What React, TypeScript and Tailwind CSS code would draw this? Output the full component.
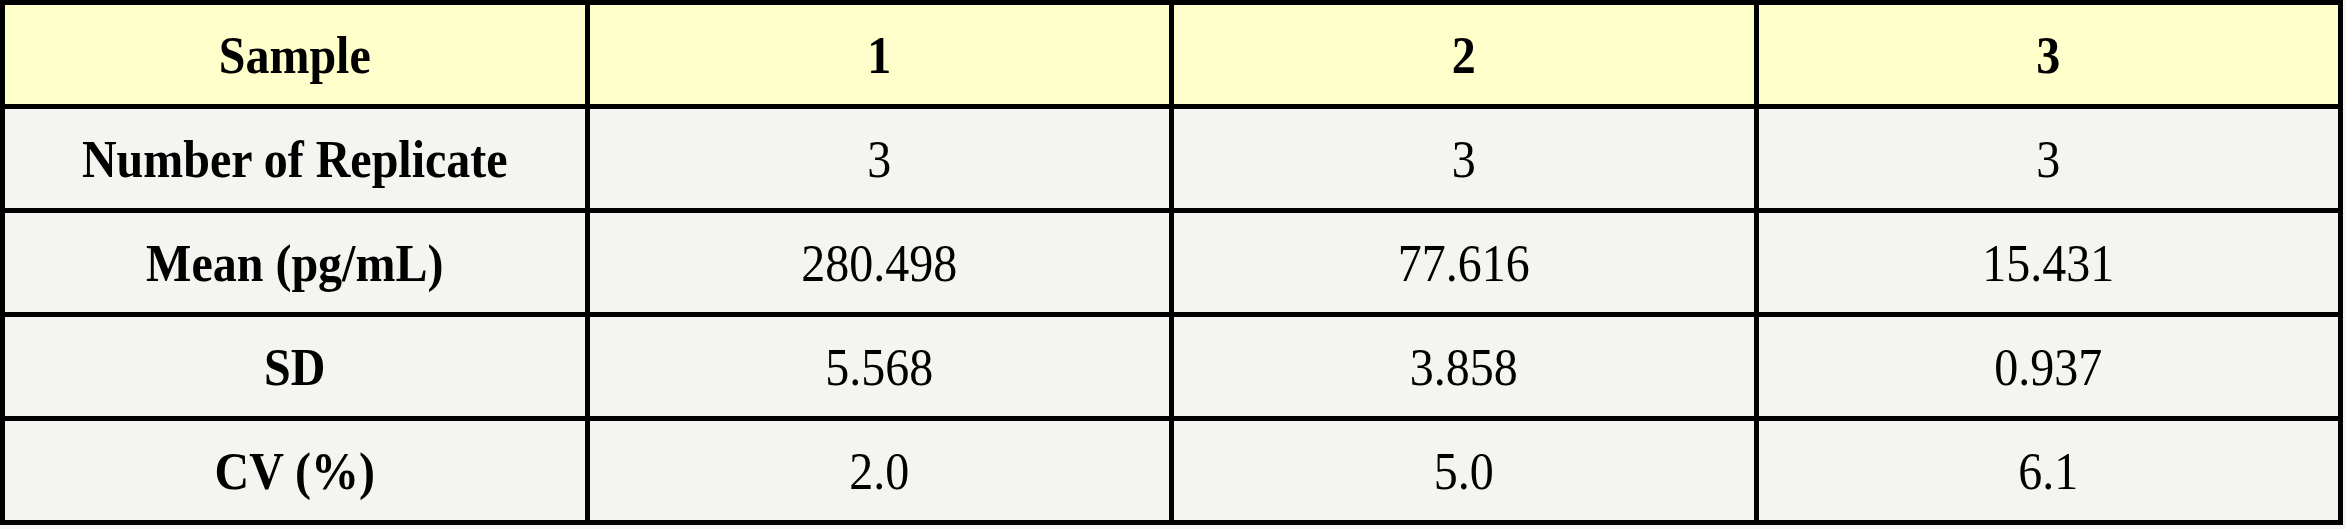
import React from "react";

const header = ["Sample", "1", "2", "3"];
const rows: string[][] = [
  ["Number of Replicate", "3", "3", "3"],
  ["Mean (pg/mL)", "280.498", "77.616", "15.431"],
  ["SD", "5.568", "3.858", "0.937"],
  ["CV (%)", "2.0", "5.0", "6.1"],
];

export default function App() {
  return (
    <div
      className="min-h-screen w-full bg-[#f4f4f1]"
      style={{ fontFamily: '"Liberation Serif", "Times New Roman", serif' }}
    >
      <div className="grid w-[2343px] grid-cols-4 gap-[5px] bg-black p-[5px] text-[48px] leading-none text-black">
        {header.map((h, i) => (
          <div
            key={`h${i}`}
            className="flex h-[99px] items-center justify-center bg-[#ffffcc] font-bold"
          >
            <span className="inline-block translate-y-[1px] scale-y-[1.08]">{h}</span>
          </div>
        ))}
        {rows.map((r, ri) =>
          r.map((c, ci) => (
            <div
              key={`r${ri}c${ci}`}
              className={`flex h-[99px] items-center justify-center bg-[#f4f4f1] ${
                ci === 0 ? "font-bold" : "font-normal"
              }`}
            >
              <span className="inline-block translate-y-[1px] scale-y-[1.08]">{c}</span>
            </div>
          ))
        )}
      </div>
    </div>
  );
}
